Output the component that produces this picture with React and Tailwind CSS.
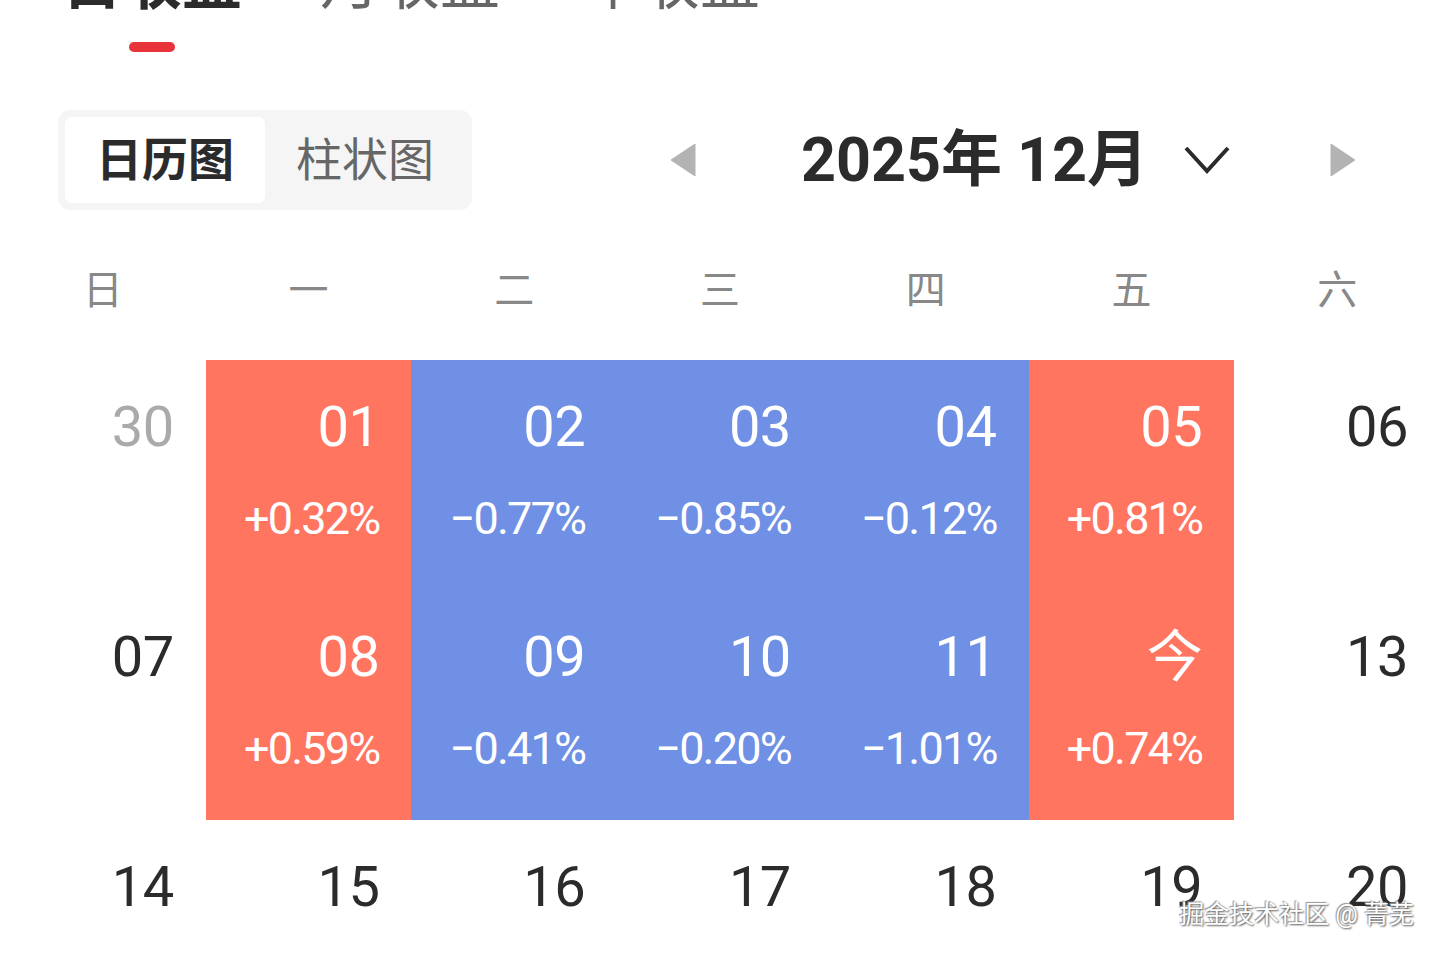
import React from 'react';

const RED = 'bg-[#ff7560]';
const BLUE = 'bg-[#6f90e4]';

const weeks = [
  [
    { d: '30', muted: true },
    { d: '01', p: '+0.32%', c: RED },
    { d: '02', p: '−0.77%', c: BLUE },
    { d: '03', p: '−0.85%', c: BLUE },
    { d: '04', p: '−0.12%', c: BLUE },
    { d: '05', p: '+0.81%', c: RED },
    { d: '06' },
  ],
  [
    { d: '07' },
    { d: '08', p: '+0.59%', c: RED },
    { d: '09', p: '−0.41%', c: BLUE },
    { d: '10', p: '−0.20%', c: BLUE },
    { d: '11', p: '−1.01%', c: BLUE },
    { d: '今', p: '+0.74%', c: RED },
    { d: '13' },
  ],
  [
    { d: '14' },
    { d: '15' },
    { d: '16' },
    { d: '17' },
    { d: '18' },
    { d: '19' },
    { d: '20' },
  ],
];

const weekdays = ['日', '一', '二', '三', '四', '五', '六'];

const font = { fontFamily: 'Roboto, "Noto Sans CJK SC", sans-serif' };

const DayCell = ({ day }) => {
  const colored = !!day.c;
  return (
    <div className={`h-[230px] flex flex-col items-end pr-[32px] pt-[35px] ${day.c || ''}`}>
      <div
        className={`text-[56px] leading-[64px] tracking-[-0.5px] ${
          colored ? 'text-white' : day.muted ? 'text-[#aaaaaa]' : 'text-[#2b2b2b]'
        }`}
      >
        {day.d}
      </div>
      {day.p && (
        <div className="mt-[35px] text-[45px] leading-[50px] tracking-[-1.8px] text-white">{day.p}</div>
      )}
    </div>
  );
};

const App = () => {
  return (
    <div className="relative w-[1440px] h-[954px] overflow-hidden bg-white" style={font}>
      {/* tabs, scrolled so only the bottom shows */}
      <div className="flex mt-[-46px] pl-[62px] gap-[78px] text-[60px] leading-[60px]">
        <div className="flex flex-col items-center">
          <span className="font-bold text-[#2b2b2b]">日收益</span>
          <span className="mt-[28px] w-[46px] h-[10px] rounded-full bg-[#e8333a]" />
        </div>
        <span className="text-[#666666]">月收益</span>
        <span className="text-[#666666] ml-[2px]">年收益</span>
      </div>

      {/* toolbar */}
      <div className="flex items-center mt-[58px] pl-[58px] pr-[84px]">
        <div className="flex w-[414px] h-[100px] p-[7px] bg-[#f5f5f5] rounded-[12px]">
          <div className="w-[200px] flex items-center justify-center bg-white rounded-[7px] text-[46px] font-bold text-[#2b2b2b]">
            日历图
          </div>
          <div className="flex-1 flex items-center justify-center text-[46px] text-[#666666]">
            柱状图
          </div>
        </div>
        <div className="ml-auto w-[686px] flex items-center justify-between">
          <svg width="26" height="34" viewBox="0 0 26 34">
            <path d="M25 1 L1 17 L25 33 Z" fill="#b3b3b3" stroke="#b3b3b3" strokeWidth="1" strokeLinejoin="round" />
          </svg>
          <div className="flex items-center gap-[35px] pl-[6px]">
            <span className="text-[61px] font-bold text-[#2b2b2b] leading-[70px]">2025年 12月</span>
            <svg width="48" height="30" viewBox="0 0 48 30">
              <path d="M3 3 L24 26 L45 3" fill="none" stroke="#2b2b2b" strokeWidth="4" />
            </svg>
          </div>
          <svg width="26" height="34" viewBox="0 0 26 34">
            <path d="M1 1 L25 17 L1 33 Z" fill="#b3b3b3" stroke="#b3b3b3" strokeWidth="1" strokeLinejoin="round" />
          </svg>
        </div>
      </div>

      {/* weekdays */}
      <div className="grid grid-cols-7 mt-[52px] h-[58px] items-center">
        {weekdays.map((w) => (
          <div key={w} className="text-center text-[40px] leading-[58px] text-[#888888]">
            {w}
          </div>
        ))}
      </div>

      {/* calendar */}
      <div className="grid grid-cols-7 mt-[40px]">
        {weeks.flat().map((day, i) => (
          <DayCell key={i} day={day} />
        ))}
      </div>

      {/* watermark */}
      <div
        className="absolute right-[26px] top-[896px] text-[25px] text-white"
        style={{ textShadow: '1px 1px 2px #555, -1px -1px 1px #999' }}
      >
        掘金技术社区 @ 菁芜
      </div>
    </div>
  );
};

export default App;
